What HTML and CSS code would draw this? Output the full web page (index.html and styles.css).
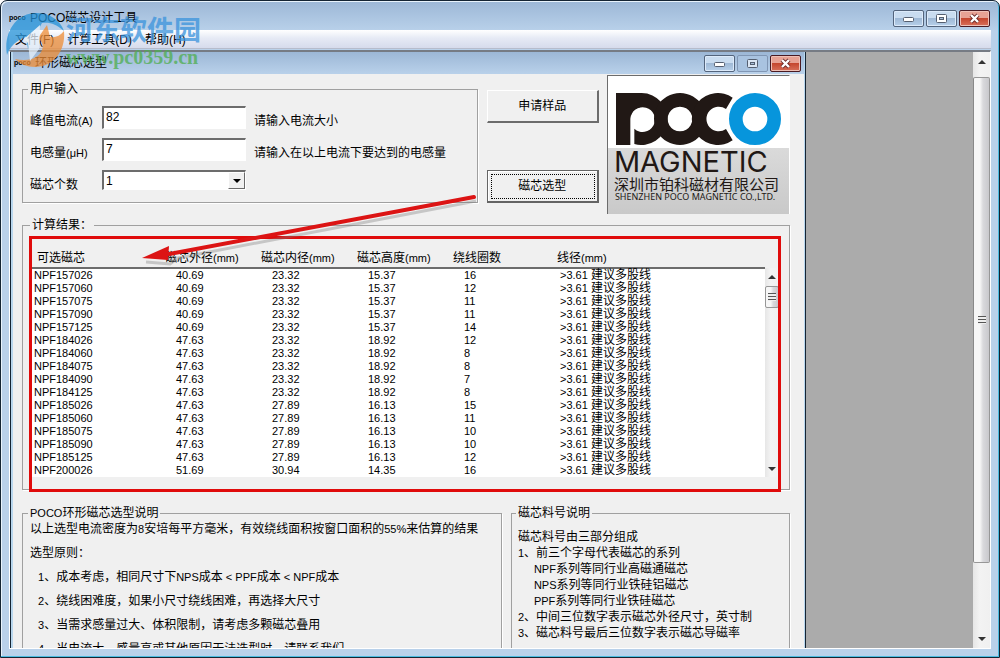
FILE: index.html
```html
<!DOCTYPE html>
<html lang="zh-CN">
<head>
<meta charset="utf-8">
<title>POCO磁芯设计工具</title>
<link rel="stylesheet" href="styles.css">
</head>
<body>
<div class="app">
  <header class="titlebar">
    <span class="app-icon">poco</span>
    <h1 class="title">POCO磁芯设计工具</h1>
    <div class="controls">
      <button class="ctl" aria-label="最小化"><svg width="13" height="11"><rect x="1.500" y="4.500" width="10" height="4" rx="1" fill="#fff" stroke="#555f70"/></svg></button>
      <button class="ctl" aria-label="最大化"><svg width="13" height="11"><rect x="1.500" y="1.500" width="10" height="8" rx="1" fill="#fff" stroke="#555f70"/><rect x="4.500" y="4.500" width="4" height="2" fill="#a9bfd8" stroke="#555f70"/></svg></button>
      <button class="ctl close" aria-label="关闭"><svg width="13" height="11"><path d="M3 2l7 7M10 2l-7 7" stroke="#6b2a28" stroke-width="4"/><path d="M3 2l7 7M10 2l-7 7" stroke="#fff" stroke-width="2.400"/></svg></button>
    </div>
  </header>
  <nav class="menu">
    <button>文件(F)</button><button>计算工具(D)</button><button>帮助(H)</button>
  </nav>
  <main class="mdi">
    <section class="child">
      <header class="titlebar child-title">
        <span class="app-icon">poco</span>
        <h2 class="title">环形磁芯选型</h2>
        <div class="controls">
          <button class="ctl" aria-label="最小化"><svg width="13" height="11"><rect x="1.500" y="4.500" width="10" height="4" rx="1" fill="#fff" stroke="#555f70"/></svg></button>
          <button class="ctl" aria-label="最大化" disabled><svg width="13" height="11"><rect x="1.500" y="1.500" width="10" height="8" rx="1" fill="#dbe6f3" stroke="#555f70"/><rect x="4.500" y="4.500" width="4" height="2" fill="#a9bfd8" stroke="#555f70"/></svg></button>
          <button class="ctl close" aria-label="关闭"><svg width="13" height="11"><path d="M3 2l7 7M10 2l-7 7" stroke="#6b2a28" stroke-width="4"/><path d="M3 2l7 7M10 2l-7 7" stroke="#fff" stroke-width="2.400"/></svg></button>
        </div>
      </header>
      <div class="dialog">
        <div class="top">
          <fieldset class="group inputs">
            <legend>用户输入</legend>
            <div class="fields">
              <label for="current">峰值电流<span class="n">(A)</span></label>
              <input id="current" type="text" value="82"><span class="hint">请输入电流大小</span>
              <label for="induct">电感量<span class="n">(μH)</span></label>
              <input id="induct" type="text" value="7"><span class="hint">请输入在以上电流下要达到的电感量</span>
              <label for="count">磁芯个数</label>
              <span class="combo"><select id="count"><option>1</option></select><span class="drop"></span></span>
            </div>
          </fieldset>
          <div class="actions">
            <button class="btn">申请样品</button>
            <button class="btn focused">磁芯选型</button>
          </div>
          <div class="brand">
            <svg class="mark" viewBox="0 0 495 156" role="img" aria-label="POCO">
              <g fill="#211815">
                <path d="M0 0H77V41A37 37 0 0 0 43 78V156H0Z"/>
                <path fill-rule="evenodd" d="M77 0A78 78 0 1 1 55 153V107A37 37 0 1 0 43 78V0Z"/>
                <path fill-rule="evenodd" d="M192 0a78 78 0 1 0 .1 0ZM192 41a37 37 0 1 1-.1 0Z"/>
                <path d="M350 14A78 78 0 1 0 350 142L330 108A37 37 0 1 1 330 48Z"/>
              </g>
              <circle cx="417" cy="78" r="84" fill="#fff"/>
              <circle cx="417" cy="78" r="57.500" fill="none" stroke="#0795dc" stroke-width="41"/>
            </svg>
            <div class="brand-text">
              <span class="brand-en">MAGNETIC</span>
              <span class="brand-cn">深圳市铂科磁材有限公司</span>
              <span class="brand-sub">SHENZHEN POCO MAGNETIC CO.,LTD.</span>
            </div>
          </div>
        </div>

        <fieldset class="group results">
          <legend>计算结果：</legend>
          <div class="list">
            <table>
              <colgroup><col class="c1"><col class="c2"><col class="c2"><col class="c2"><col class="c3"><col></colgroup>
              <thead><tr><th>可选磁芯</th><th>磁芯外径<span class="n">(mm)</span></th><th>磁芯内径<span class="n">(mm)</span></th><th>磁芯高度<span class="n">(mm)</span></th><th>绕线圈数</th><th>线径<span class="n">(mm)</span></th></tr></thead>
              <tbody>
                <tr><td>NPF157026</td><td>40.69</td><td>23.32</td><td>15.37</td><td>16</td><td>&gt;3.61 <b>建议多股线</b></td></tr>
                <tr><td>NPF157060</td><td>40.69</td><td>23.32</td><td>15.37</td><td>12</td><td>&gt;3.61 <b>建议多股线</b></td></tr>
                <tr><td>NPF157075</td><td>40.69</td><td>23.32</td><td>15.37</td><td>11</td><td>&gt;3.61 <b>建议多股线</b></td></tr>
                <tr><td>NPF157090</td><td>40.69</td><td>23.32</td><td>15.37</td><td>11</td><td>&gt;3.61 <b>建议多股线</b></td></tr>
                <tr><td>NPF157125</td><td>40.69</td><td>23.32</td><td>15.37</td><td>14</td><td>&gt;3.61 <b>建议多股线</b></td></tr>
                <tr><td>NPF184026</td><td>47.63</td><td>23.32</td><td>18.92</td><td>12</td><td>&gt;3.61 <b>建议多股线</b></td></tr>
                <tr><td>NPF184060</td><td>47.63</td><td>23.32</td><td>18.92</td><td>8</td><td>&gt;3.61 <b>建议多股线</b></td></tr>
                <tr><td>NPF184075</td><td>47.63</td><td>23.32</td><td>18.92</td><td>8</td><td>&gt;3.61 <b>建议多股线</b></td></tr>
                <tr><td>NPF184090</td><td>47.63</td><td>23.32</td><td>18.92</td><td>7</td><td>&gt;3.61 <b>建议多股线</b></td></tr>
                <tr><td>NPF184125</td><td>47.63</td><td>23.32</td><td>18.92</td><td>8</td><td>&gt;3.61 <b>建议多股线</b></td></tr>
                <tr><td>NPF185026</td><td>47.63</td><td>27.89</td><td>16.13</td><td>15</td><td>&gt;3.61 <b>建议多股线</b></td></tr>
                <tr><td>NPF185060</td><td>47.63</td><td>27.89</td><td>16.13</td><td>11</td><td>&gt;3.61 <b>建议多股线</b></td></tr>
                <tr><td>NPF185075</td><td>47.63</td><td>27.89</td><td>16.13</td><td>10</td><td>&gt;3.61 <b>建议多股线</b></td></tr>
                <tr><td>NPF185090</td><td>47.63</td><td>27.89</td><td>16.13</td><td>10</td><td>&gt;3.61 <b>建议多股线</b></td></tr>
                <tr><td>NPF185125</td><td>47.63</td><td>27.89</td><td>16.13</td><td>12</td><td>&gt;3.61 <b>建议多股线</b></td></tr>
                <tr><td>NPF200026</td><td>51.69</td><td>30.94</td><td>14.35</td><td>16</td><td>&gt;3.61 <b>建议多股线</b></td></tr>
              </tbody>
            </table>
            <div class="scroll list-scroll"><i class="up"></i><span class="thumb"></span><i class="down"></i></div>
          </div>
          <div class="highlight"></div>
        </fieldset>

        <div class="notes">
          <fieldset class="group guide">
            <legend><span class="n">POCO</span>环形磁芯选型说明</legend>
            <p>以上选型电流密度为<span class="n">8</span>安培每平方毫米，有效绕线面积按窗口面积的<span class="n">55%</span>来估算的结果</p>
            <p>选型原则：</p>
            <p class="item"><span class="n">1</span>、成本考虑，相同尺寸下<span class="n">NPS</span>成本<span class="n"> &lt; PPF</span>成本<span class="n"> &lt; NPF</span>成本</p>
            <p class="item"><span class="n">2</span>、绕线困难度，如果小尺寸绕线困难，再选择大尺寸</p>
            <p class="item"><span class="n">3</span>、当需求感量过大、体积限制，请考虑多颗磁芯叠用</p>
            <p class="item"><span class="n">4</span>、当电流大，感量高或其他原因无法选型时，请联系我们</p>
          </fieldset>
          <fieldset class="group codes">
            <legend>磁芯料号说明</legend>
            <p>磁芯料号由三部分组成</p>
            <p><span class="n">1</span>、前三个字母代表磁芯的系列</p>
            <p class="sub"><span class="n">NPF</span>系列等同行业高磁通磁芯</p>
            <p class="sub"><span class="n">NPS</span>系列等同行业铁硅铝磁芯</p>
            <p class="sub"><span class="n">PPF</span>系列等同行业铁硅磁芯</p>
            <p><span class="n">2</span>、中间三位数字表示磁芯外径尺寸，英寸制</p>
            <p><span class="n">3</span>、磁芯料号最后三位数字表示磁芯导磁率</p>
          </fieldset>
        </div>
        <svg class="arrow" width="350" height="80" viewBox="0 0 350 80" aria-hidden="true">
          <path d="M338 9L40 66L32 72L8 70" fill="none" stroke="#777" stroke-width="3" opacity=".35"/>
          <path d="M336 5L26 63" stroke="#dc1414" stroke-width="4" stroke-linecap="round"/>
          <path d="M4 66L31 54L30 68Z" fill="#dc1414"/>
        </svg>
      </div>
    </section>
    <div class="workspace"></div>
    <div class="scroll main-scroll"><i class="up"></i><span class="thumb"></span><i class="down"></i></div>
  </main>
  <div class="watermark">
    <svg width="62" height="60" viewBox="0 0 62 60" aria-hidden="true">
      <path d="M3 46C-1 24 12 4 32 4c14 0 24 7 28 18-8-7-14-9-22-8L24 40l-2-12C13 31 6 37 3 46Z" fill="#2492d8"/>
      <path d="M60 22c2 20-11 36-29 36-8 0-15-3-20-8 14 3 24-1 27-9 2-6-1-9-4-12l9-13 3 12c5 1 10-1 14-6Z" fill="#ee8d36"/>
      <path d="M20 30L36 16l-1 24-9 12-2-18Z" fill="#e8f2fb"/>
    </svg>
    <div class="wm-text"><span class="wm-cn">河东软件园</span><span class="wm-url">www.pc0359.cn</span></div>
  </div>
</div>
</body>
</html>
```
FILE: styles.css
```css
* { box-sizing: border-box; }
body {
  margin: 0;
  background: #fff;
  color: #000;
  font: 12px/16px "Liberation Sans", "Noto Sans CJK SC", sans-serif;
}
button, input, select { font: inherit; color: inherit; }
p, h1, h2 { margin: 0; font-size: 12px; font-weight: 400; }
.n { font-size: 11px; }

.app {
  position: relative;
  display: flex;
  flex-direction: column;
  height: 100vh;
  padding: 2px 8px 8px;
  border: 1px solid #142433;
  border-radius: 7px 7px 0 0;
  background: linear-gradient(#9cb7d6, #b9d1ea 30px, #b9d1ea);
  box-shadow: inset -1px -1px 0 #4cbbe0, inset 1px 1px 0 #e8f3fc;
  overflow: hidden;
}

/* Title bars */
.titlebar {
  display: flex;
  flex: none;
  align-items: center;
  gap: 3px;
  height: 27px;
  padding: 3px 0 0;
}
.app-icon { width: 18px; font: bold 7px/10px "Liberation Sans", sans-serif; }
.title { flex: 1; line-height: 16px; }
.controls { display: flex; gap: 2px; margin-right: 1px; }
.ctl {
  display: grid;
  place-items: center;
  width: 31px;
  height: 17px;
  padding: 0;
  border: 1px solid #53647c;
  border-radius: 2px;
  background: linear-gradient(#c9dcf0 45%, #9fb9d6 50%, #b7d0ea);
  box-shadow: inset 0 0 0 1px #dceafa;
}
.ctl:disabled { border-color: #8096b4; background: #a9c3e0; box-shadow: none; }
.ctl.close {
  border-color: #4a1a22;
  background: linear-gradient(#e7a294 45%, #c5472f 50%, #d8705a);
  box-shadow: inset 0 0 0 1px #eec0b6;
}

.menu {
  display: flex;
  flex: none;
  gap: 13px;
  height: 19px;
  padding: 0 6px;
  background: linear-gradient(#fff, #e6eaf5 45%, #d6dbec);
  border-bottom: 1px solid #b6bccc;
}
.menu button { padding: 2px 0 0; border: 0; background: none; line-height: 16px; }

/* MDI area */
.mdi {
  display: flex;
  flex: 1;
  min-height: 0;
  margin-top: 1px;
  border: 1px solid #fff;
  border-top: 2px solid #767b84;
  background: #ababab;
}
.child {
  display: flex;
  flex: 795;
  flex-direction: column;
  min-width: 0;
  padding: 0 1px 0 2px;
  border-left: 1px solid #142433;
  border-right: 1px solid #142433;
  background: #b9d7ee;
}
.workspace { flex: 168; }
.child-title {
  height: 22px;
  padding: 0 2px 0 1px;
  background: linear-gradient(#9cb7d6, #b9d1ea);
}
.dialog {
  position: relative;
  display: flex;
  flex: 1;
  flex-direction: column;
  min-height: 0;
  padding: 1px 14px 0 9px;
  background: #f0f0f0;
  overflow: hidden;
}
.group {
  min-width: 0;
  margin: 0;
  padding: 0 8px;
  border: 1px solid #a0a0a0;
  box-shadow: 1px 1px 0 #fff;
}
.group legend { margin-left: -2px; padding: 0 2px; line-height: 8px; }

.top { display: flex; }
.inputs { flex: 1; margin-top: 10px; align-self: flex-start; padding: 13px 0 0 7px; }
.fields {
  display: grid;
  grid-template-columns: 72px 144px 1fr;
  grid-auto-rows: 32px;
}
.fields label, .hint { line-height: 31px; white-space: nowrap; }
.hint { padding-left: 8px; }
.fields input, .fields select {
  width: 100%;
  height: 23px;
  padding: 0 2px 3px;
  border: 1px solid #fff;
  border-top: 2px solid #6c6c6c;
  border-left: 2px solid #6c6c6c;
  border-radius: 0;
  background: #fff;
  outline: 0;
}
.combo { position: relative; height: 20px; }
.fields select { height: 20px; padding: 0 2px; appearance: none; }
.drop {
  position: absolute;
  top: 2px;
  right: 1px;
  display: grid;
  place-items: center;
  width: 17px;
  height: 17px;
  border: 1px solid #fff;
  border-right-color: #696969;
  border-bottom-color: #696969;
  background: #f0f0f0;
  pointer-events: none;
}
.drop::after {
  content: "";
  border: 4px solid transparent;
  border-top-color: #000;
  border-bottom: 0;
}

.actions { display: flex; flex-direction: column; gap: 47px; width: 112px; margin: 15px 8px 0 9px; }
.btn {
  height: 33px;
  padding: 0;
  border: 1px solid #fff;
  border-right: 2px solid #6c6c6c;
  border-bottom: 2px solid #6c6c6c;
  background: #f0f0f0;
}
.btn.focused {
  border: 1px solid #646464;
  border-right-width: 2px;
  border-bottom-width: 2px;
  outline: 1px dotted #000;
  outline-offset: -5px;
  box-shadow: inset 1px 1px 0 #fff;
}

.brand {
  display: flex;
  flex-direction: column;
  width: 183px;
  height: 139px;
  border-top: 1px solid #6c6c6c;
  border-left: 1px solid #6c6c6c;
  border-right: 1px solid #fff;
  background: #fff;
}
.mark { width: 165px; height: 52px; margin: 17px 0 3px 8px; }
.brand-text {
  display: flex;
  flex: 1;
  flex-direction: column;
  padding-left: 6px;
  background: linear-gradient(#dadada, #c9c9c9);
  color: #211815;
  white-space: nowrap;
}
.brand-en { font: 400 29px/28px Inter, sans-serif; }
.brand-cn { font: 15px/15px "Noto Sans CJK SC", sans-serif; }
.brand-sub { padding-left: 1px; font: 400 9px/12px "Noto Sans", sans-serif; }

/* Result list */
.results { position: relative; margin-top: 7px; padding: 19px 10px 12px 9px; }
.list { display: flex; }
.list table {
  flex: 1;
  table-layout: fixed;
  border-collapse: collapse;
  background: #fff;
}
.c1 { width: 130px; }
.c2 { width: 96px; }
.c3 { width: 104px; }
.list th {
  height: 20px;
  padding: 0 3px;
  border-bottom: 2px solid #6c6c6c;
  background: #f0f0f0;
  font-weight: 400;
  line-height: 18px;
  text-align: left;
  white-space: nowrap;
}
.list th:first-child { padding-left: 5px; }
.list td { padding: 0 0 0 14px; font-size: 11px; line-height: 13px; white-space: nowrap; }
.list td:first-child { padding-left: 2px; }
.list td:last-child { padding-left: 6px; }
.list tr { height: 13px; }
.list b { font-size: 12px; font-weight: 400; line-height: 12px; }
.highlight {
  position: absolute;
  inset: 7px 8px -3px 6px;
  border: 3px solid #e00b0b;
}

.scroll {
  display: flex;
  flex-direction: column;
  align-items: center;
  background: linear-gradient(90deg, #e6e6e6, #f3f3f3 40%, #f0f0f0);
}
.up, .down { flex: none; border: 4px solid transparent; }
.up { border-top: 0; border-bottom-color: #333; }
.down { border-bottom: 0; border-top-color: #333; }
.thumb {
  display: grid;
  place-items: center;
  width: 100%;
  border: 1px solid #979797;
  border-radius: 2px;
  background: linear-gradient(90deg, #f6f6f6 40%, #d9d9dc 60%, #c8c8cc);
}
.thumb::after {
  content: "";
  width: 8px;
  height: 8px;
  background: repeating-linear-gradient(#555 0 1px, #eee 1px 3px);
}
.list-scroll { width: 14px; margin-top: 20px; padding: 7px 0 6px; }
.list-scroll .thumb { height: 22px; margin-top: 7px; }
.list-scroll .down { margin-top: auto; }
.main-scroll { width: 17px; padding: 8px 0 7px; }
.main-scroll .thumb { flex: 486; margin: 13px 0 0; border-left-color: #888; }
.main-scroll .down { margin-top: 74px; }

.notes { display: grid; grid-template-columns: 480fr 279fr; gap: 9px; margin-top: 19px; }
.group p { white-space: nowrap; }
.guide, .codes { min-height: 150px; }
.guide { padding: 0 7px; }
.guide p { line-height: 24px; }
.guide .item { padding-left: 8px; }
.codes { padding: 12px 6px 0; }
.codes .sub { padding-left: 16px; }

.arrow { position: absolute; left: 125px; top: 118px; pointer-events: none; }

.watermark { position: absolute; left: 3px; top: 8px; display: flex; opacity: .75; pointer-events: none; }
.wm-text { display: flex; flex-direction: column; padding-top: 3px; }
.wm-cn { font: 700 27px/34px "Noto Sans CJK SC", sans-serif; color: #3a93dc; }
.wm-url { font: 700 20px/22px "Liberation Serif", serif; color: #4fae50; }
```
